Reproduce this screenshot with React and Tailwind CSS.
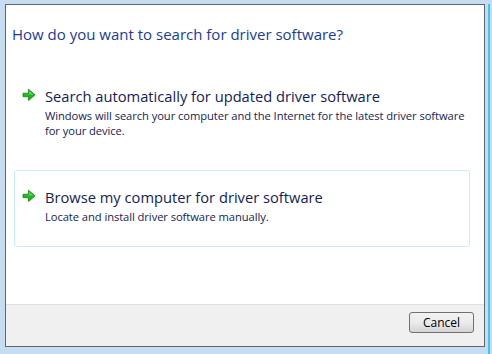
import React from "react";

const GreenArrow = () => (
	<svg width="15" height="15" viewBox="0 0 15 15" className="shrink-0">
		<polygon points="1.6,6.2 7,6.2 7,2.2 13.6,7.8 7,13.4 7,9.6 1.6,9.6" fill="#a9dcaa" opacity="0.6" />
		<polygon points="1,5.2 6.4,5.2 6.4,1.2 13,6.8 6.4,12.4 6.4,8.6 1,8.6" fill="#1fb51f" stroke="#158515" strokeWidth="0.8" strokeLinejoin="round" />
		<polygon points="1.8,5.9 7.1,5.9 7.1,2.9 11.6,6.7" fill="#72e272" opacity="0.75" />
	</svg>
);

const CommandLink = ({ title, desc, bordered }) => (
	<div
		className={
			bordered
				? "flex gap-[8px] pl-[7px] pt-[17px] h-[77px] rounded-[3px] border border-[#c6eff9]"
				: "flex gap-[8px] pl-[7px] pt-[17px] h-[77px] rounded-[3px] border border-transparent"
		}
	>
		<div className="pt-[1px]">
			<GreenArrow />
		</div>
		<div className="flex flex-col text-[#151c55]">
			<div className="text-[14.7px] leading-[19px]">{title}</div>
			<div className="text-[11.2px] leading-[15px] tracking-[-0.07px] mt-[2px]">{desc}</div>
		</div>
	</div>
);

export default function App() {
	return (
		<div
			className="w-[492px] h-[354px] flex bg-[#c6dcf1] pl-[5px] pt-[4px]"
			style={{ fontFamily: '"Open Sans", "Noto Sans", sans-serif' }}
		>
			<div className="w-[480px] h-[343px] flex flex-col bg-white border border-[#5f6670]">
				<div className="flex-1 flex flex-col pl-[8px] pr-[14px]">
					<h1 className="text-[15px] leading-[20px] text-[#1a3b9e] mt-[19px] ml-[-2px]">
						How do you want to search for driver software?
					</h1>
					<div className="flex flex-col gap-[24px] mt-[25px]">
						<CommandLink
							title="Search automatically for updated driver software"
							desc="Windows will search your computer and the Internet for the latest driver software for your device."
						/>
						<CommandLink
							bordered
							title="Browse my computer for driver software"
							desc="Locate and install driver software manually."
						/>
					</div>
				</div>
				<div className="h-[42px] flex justify-end items-start pt-[7px] pr-[10px] bg-[#f0f0f0] border-t border-[#dfdfdf]">
					<button className="w-[65px] h-[21px] rounded-[3px] border border-[#707070] text-[12px] text-black bg-gradient-to-b from-[#f2f2f2] via-[#ebebeb] to-[#d4d4d4]">
						Cancel
					</button>
				</div>
			</div>
			<div className="ml-[3px] w-[2px] h-full bg-[#3cc8f4]" />
		</div>
	);
}
